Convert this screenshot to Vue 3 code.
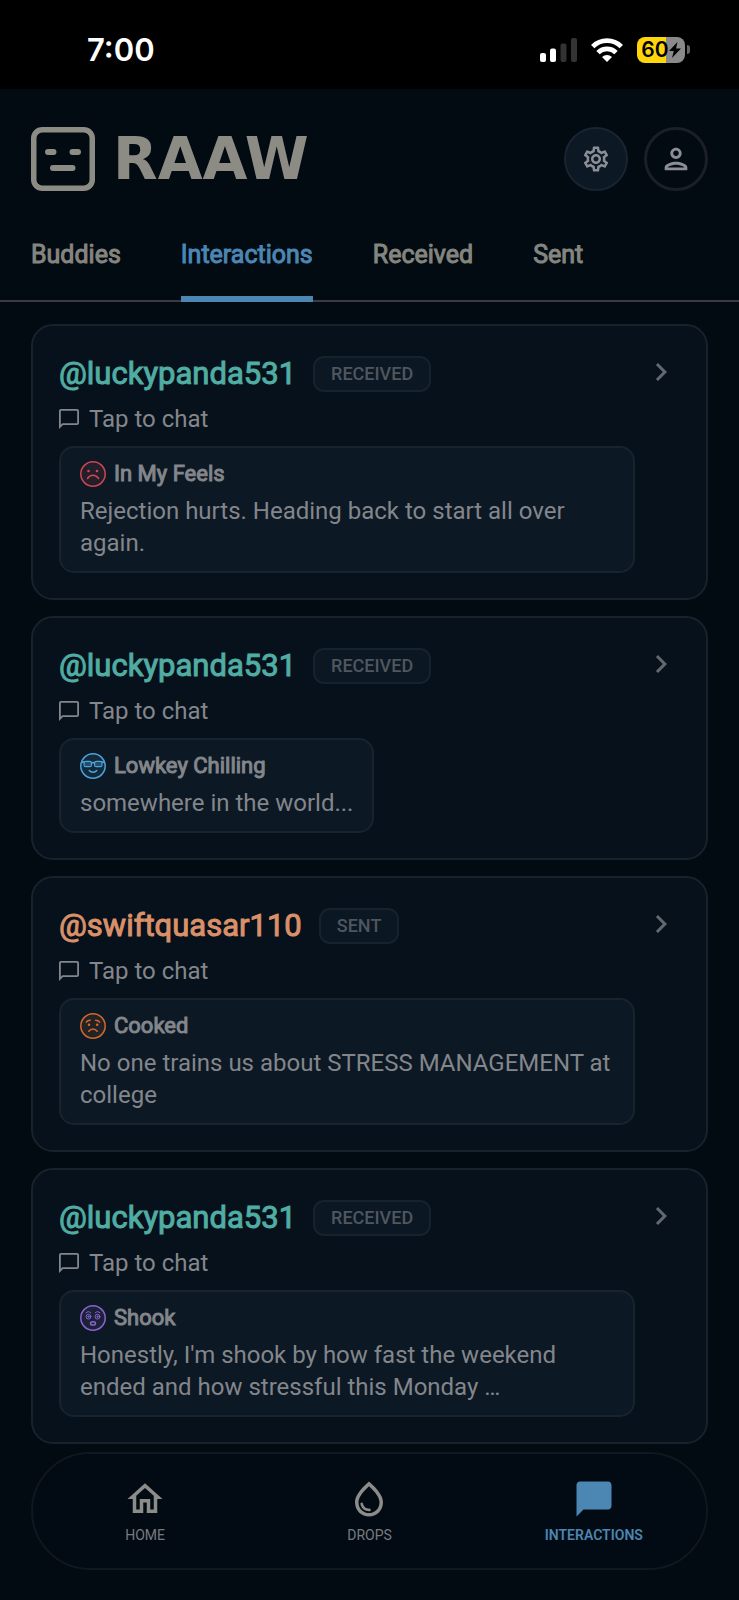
<script setup>
import { ref } from 'vue'

const tabs = ['Buddies', 'Interactions', 'Received', 'Sent']
const activeTab = ref('Interactions')

const cards = [
  { id: 1, user: '@luckypanda531', kind: 'received', mood: 'feels', label: 'In My Feels', text: 'Rejection hurts. Heading back to start all over again.' },
  { id: 2, user: '@luckypanda531', kind: 'received', mood: 'chill', label: 'Lowkey Chilling', text: 'somewhere in the world...' },
  { id: 3, user: '@swiftquasar110', kind: 'sent', mood: 'cooked', label: 'Cooked', text: 'No one trains us about STRESS MANAGEMENT at college' },
  { id: 4, user: '@luckypanda531', kind: 'received', mood: 'shook', label: 'Shook', text: "Honestly, I'm shook by how fast the weekend ended and how stressful this Monday …" },
]
</script>

<template>
  <div class="app">
    <div class="status">
      <span class="time">7:00</span>
      <div class="status-icons">
        <svg class="signal" viewBox="0 0 37 24" aria-label="Signal">
          <rect x="0" y="15" width="6" height="9" rx="2" fill="#fff" />
          <rect x="10" y="10.500" width="6" height="13.500" rx="2" fill="#fff" />
          <rect x="20.500" y="5.500" width="6" height="18.500" rx="2" fill="#333" />
          <rect x="31" y="0" width="6" height="24" rx="2" fill="#333" />
        </svg>
        <svg class="wifi" viewBox="0 0 32 24" aria-label="Wi-Fi">
          <g fill="none" stroke="#fff" stroke-width="4.800">
            <path d="M1.700 8.600a20.300 20.300 0 0 1 28.600 0" />
            <path d="M7 14.600a12.800 12.800 0 0 1 18 0" />
          </g>
          <path d="M16 24l-5-5a7.300 7.300 0 0 1 10 0z" fill="#fff" />
        </svg>
        <div class="battery">
          <div class="cell">
            <span>60</span>
            <svg class="bolt" viewBox="0 0 12 16"><path d="M8.500 0L0 9h4.800L3 16l9-9.500H7z" fill="#000" /></svg>
          </div>
          <i class="nub"></i>
        </div>
      </div>
    </div>

    <header class="header">
      <div class="brand">
        <svg class="logo" viewBox="0 0 64 64" aria-hidden="true">
          <rect x="2.750" y="2.750" width="58.500" height="58.500" rx="8.500" fill="none" stroke="#8c8b84" stroke-width="5.500" />
          <path d="M17 25h5.500M41.500 25h5.500M22 41h19.500" stroke="#8c8b84" stroke-width="6" stroke-linecap="round" />
        </svg>
        <h1>RAAW</h1>
      </div>
      <div class="actions">
        <button class="round filled" aria-label="Settings">
          <svg class="gear" viewBox="0 0 24 24"><path d="M19.430 12.980c.04-.32.07-.64.07-.98 0-.34-.03-.66-.07-.98l2.110-1.650c.19-.15.24-.42.12-.64l-2-3.460c-.09-.16-.26-.25-.44-.25-.06 0-.12.01-.17.03l-2.490 1c-.52-.4-1.080-.73-1.690-.98l-.38-2.650C14.460 2.180 14.250 2 14 2h-4c-.25 0-.46.18-.49.42l-.38 2.650c-.61.25-1.170.59-1.690.98l-2.490-1c-.06-.02-.12-.03-.18-.03-.17 0-.34.09-.43.25l-2 3.460c-.13.22-.07.49.12.64l2.110 1.650c-.04.32-.07.65-.07.98 0 .33.03.66.07.98l-2.110 1.650c-.19.15-.24.42-.12.64l2 3.460c.09.16.26.25.44.25.06 0 .12-.01.17-.03l2.490-1c.52.4 1.080.73 1.690.98l.38 2.650c.03.24.24.42.49.42h4c.25 0 .46-.18.49-.42l.38-2.650c.61-.25 1.170-.59 1.690-.98l2.490 1c.06.02.12.03.18.03.17 0 .34-.09.43-.25l2-3.460c.12-.22.07-.49-.12-.64l-2.110-1.650zm-1.980-1.710c.04.31.05.52.05.73 0 .21-.02.43-.05.73l-.14 1.130.89.7 1.080.84-.7 1.210-1.270-.51-1.040-.42-.9.68c-.43.32-.84.56-1.250.73l-1.060.43-.16 1.130-.2 1.350h-1.400l-.19-1.350-.16-1.130-1.060-.43c-.43-.18-.83-.41-1.230-.71l-.91-.7-1.060.43-1.270.51-.7-1.210 1.080-.84.89-.7-.14-1.130c-.03-.31-.05-.54-.05-.74s.02-.43.05-.73l.14-1.130-.89-.7-1.080-.84.7-1.210 1.270.51 1.040.42.9-.68c.43-.32.84-.56 1.250-.73l1.060-.43.16-1.130.2-1.350h1.390l.19 1.350.16 1.130 1.060.43c.43.18.83.41 1.230.71l.91.7 1.060-.43 1.270-.51.7 1.210-1.070.85-.89.7.14 1.130zM12 8c-2.210 0-4 1.790-4 4s1.790 4 4 4 4-1.790 4-4-1.790-4-4-4zm0 6c-1.100 0-2-.9-2-2s.9-2 2-2 2 .9 2 2-.9 2-2 2z" /></svg>
        </button>
        <button class="round" aria-label="Profile">
          <svg class="person" viewBox="0 0 24 24"><path d="M12 6c1.100 0 2 .9 2 2s-.9 2-2 2-2-.9-2-2 .9-2 2-2m0 10c2.700 0 5.800 1.290 6 2H6c.23-.72 3.310-2 6-2m0-12C9.790 4 8 5.790 8 8s1.790 4 4 4 4-1.790 4-4-1.790-4-4-4zm0 10c-2.670 0-8 1.340-8 4v2h16v-2c0-2.660-5.330-4-8-4z" /></svg>
        </button>
      </div>
    </header>

    <nav class="tabs" aria-label="Lists">
      <button v-for="t in tabs" :key="t" :class="{ active: t === activeTab }" @click="activeTab = t">{{ t }}</button>
    </nav>

    <main class="list">
      <a v-for="c in cards" :key="c.id" class="card" href="#chat">
        <div class="body">
          <div class="top">
            <h2 :class="c.kind">{{ c.user }}</h2>
            <span class="badge">{{ c.kind.toUpperCase() }}</span>
          </div>
          <div class="tap">
            <svg viewBox="2 2 20 20"><path d="M20 2H4c-1.100 0-2 .9-2 2v18l4-4h14c1.100 0 2-.9 2-2V4c0-1.100-.9-2-2-2zm.2 14.200H5.300L3.800 17.700V3.800h16.400z" /></svg>
            <span>Tap to chat</span>
          </div>
          <div class="bubble">
            <div class="mood">
              <svg v-if="c.mood === 'feels'" class="feels" viewBox="0 0 26 26">
                <circle cx="13" cy="13" r="12.200" />
                <path d="M7.500 17.500c2.500-4.200 8.500-4.200 11 0" />
                <circle class="dot" cx="8.500" cy="10" r="1.300" /><circle class="dot" cx="17" cy="10" r="1.300" />
              </svg>
              <svg v-else-if="c.mood === 'chill'" class="chill" viewBox="0 0 26 26">
                <circle cx="13" cy="13" r="12.200" />
                <path d="M1.500 9.500l2.500-.8M24.500 9.500l-2.500-.8M11.500 10.200c1-.8 2-.8 3 0M9.200 17.500c2 2.300 5.600 2.300 7.600 0" />
                <rect class="lens" x="4" y="8.300" width="7.500" height="5.400" rx="1.800" />
                <rect class="lens" x="14.500" y="8.300" width="7.500" height="5.400" rx="1.800" />
              </svg>
              <svg v-else-if="c.mood === 'cooked'" class="cooked" viewBox="0 0 26 26">
                <circle cx="13" cy="13" r="12.200" />
                <path d="M6.200 9.200c.8-1.300 2.200-2 4-2M15.600 7.200c1.800 0 3.200.7 4 2M8.800 18.300c2.400-3.200 6-3.200 8.400 0" />
                <circle class="dot" cx="9" cy="11.800" r="1.300" /><circle class="dot" cx="17.200" cy="11.800" r="1.300" />
              </svg>
              <svg v-else class="shook" viewBox="0 0 26 26">
                <circle cx="13" cy="13" r="12.200" />
                <g class="thin">
                  <circle cx="8.500" cy="11.700" r="2.400" /><circle cx="17.500" cy="11.700" r="2.400" />
                  <circle cx="8.500" cy="11.700" r=".7" /><circle cx="17.500" cy="11.700" r=".7" />
                  <path d="M6 7.800c1.200-1.500 3.600-1.500 4.800 0M15.200 7.800c1.200-1.500 3.600-1.500 4.800 0" />
                </g>
                <ellipse cx="13" cy="18.400" rx="2.500" ry="1.700" />
              </svg>
              <strong>{{ c.label }}</strong>
            </div>
            <p>{{ c.text }}</p>
          </div>
        </div>
        <svg class="chevron" viewBox="0 0 24 24"><path d="M10 6L8.590 7.410 13.170 12l-4.580 4.590L10 18l6-6z" /></svg>
      </a>
    </main>

    <nav class="dock" aria-label="Main">
      <a href="#home">
        <svg viewBox="0 0 24 24"><path d="M12 5.690l5 4.500V18h-2v-6H9v6H7v-7.810l5-4.500M12 3L2 12h3v8h6v-6h2v6h6v-8h3L12 3z" /></svg>
        <span>HOME</span>
      </a>
      <a href="#drops">
        <svg viewBox="0 0 24 24"><path d="M12 2c-5.330 4.550-8 8.480-8 11.800 0 4.980 3.800 8.200 8 8.200s8-3.220 8-8.200c0-3.320-2.670-7.250-8-11.800zm0 18c-3.350 0-6-2.570-6-6.200 0-2.340 1.950-5.440 6-9.140 4.050 3.700 6 6.790 6 9.140 0 3.630-2.650 6.200-6 6.200zm-4.170-6c.37 0 .67.26.74.62.41 2.220 2.280 2.980 3.640 2.870.43-.02.79.32.79.75 0 .4-.32.73-.72.75-2.130.13-4.620-1.090-5.190-4.120-.08-.45.28-.87.74-.87z" /></svg>
        <span>DROPS</span>
      </a>
      <a href="#interactions" class="active" aria-current="page">
        <svg viewBox="0 0 24 24"><path d="M20 2H4c-1.100 0-2 .9-2 2v18l4-4h14c1.100 0 2-.9 2-2V4c0-1.100-.9-2-2-2z" /></svg>
        <span>INTERACTIONS</span>
      </a>
    </nav>
  </div>
</template>

<style>
body { background: #020a12; }
</style>

<style scoped>
* { box-sizing: border-box; }
.app {
  min-height: 100vh;
  background: #020a12;
  color: #83868b;
  font-family: Roboto, "Liberation Sans", sans-serif;
}
svg { display: block; flex: none; fill: currentColor; }
h1, h2, p { margin: 0; }
button { border: 0; background: none; padding: 0; color: inherit; font: inherit; cursor: pointer; }
a { color: inherit; text-decoration: none; }

.status {
  height: 89px;
  background: #000;
  display: flex;
  align-items: center;
  justify-content: space-between;
  padding: 10px 49px 0 87px;
}
.time { color: #fff; font: 600 31px/40px Inter, sans-serif; }
.status-icons { display: flex; align-items: center; gap: 14px; }
.signal { width: 37px; height: 24px; }
.wifi { width: 32px; height: 24px; }
.battery { display: flex; align-items: center; gap: 2px; }
.cell {
  width: 48px;
  height: 26px;
  border-radius: 8px;
  background: linear-gradient(90deg, #ffd60a 60%, #8a8a8a 60%);
  display: flex;
  align-items: center;
  justify-content: center;
  color: #000;
  font: 600 21px/26px Inter, sans-serif;
}
.bolt { width: 12px; height: 16px; }
.nub { width: 3px; height: 9px; border-radius: 0 4px 4px 0; background: #666; }

.header {
  display: flex;
  align-items: center;
  justify-content: space-between;
  padding: 38px 31px 0;
}
.brand { display: flex; align-items: center; gap: 18px; color: #8c8b84; }
.logo { width: 64px; height: 64px; }
h1 { font: 700 58px/60px "DejaVu Sans", sans-serif; }
.actions { display: flex; gap: 16px; }
.round {
  width: 64px;
  height: 64px;
  border-radius: 50%;
  border: 3px solid #1b1f2a;
  display: flex;
  align-items: center;
  justify-content: center;
  color: #8b8e95;
}
.round.filled { background: #0c1925; border: 2px solid #18242f; }
.gear { width: 30px; height: 30px; }
.person { width: 34px; height: 34px; }

.tabs {
  display: flex;
  gap: 60px;
  padding: 0 31px;
  margin-top: 16px;
  height: 95px;
  border-bottom: 2px solid #3a3b48;
}
.tabs button {
  height: 95px;
  padding-top: 6px;
  font-size: 25px;
  line-height: 30px;
  color: #85857f;
  -webkit-text-stroke: 1px currentColor;
  border-bottom: 6px solid transparent;
}
.tabs button.active {
  color: #4c86b2;
  background: linear-gradient(#4c86b2, #4c86b2) bottom / 100% 6px no-repeat border-box;
  border-radius: 5px 5px 0 0;
}

.list { display: flex; flex-direction: column; gap: 16px; padding: 22px 31px 0; }
.card {
  display: flex;
  align-items: flex-start;
  gap: 8px;
  padding: 28px 27px 25px 26px;
  border: 2px solid #19212b;
  border-radius: 22px;
  background: #07111b;
}
.body { flex: 1; min-width: 0; }
.top { display: flex; align-items: center; gap: 17px; height: 40px; }
h2 { font-size: 31px; line-height: 36px; font-weight: 400; -webkit-text-stroke: 1px currentColor; }
h2.received { color: #50ada3; }
h2.sent { color: #da9069; }
.badge {
  height: 36px;
  padding: 0 16px;
  border: 2px solid #17222c;
  border-radius: 11px;
  background: #0b1722;
  color: #50565f;
  font-size: 18px;
  line-height: 32px;
  font-weight: 500;
}
.tap { display: flex; align-items: center; gap: 10px; margin-top: 11px; font-size: 24px; line-height: 28px; }
.tap svg { width: 20px; height: 20px; }
.bubble {
  width: fit-content;
  max-width: 100%;
  margin-top: 13px;
  padding: 12px 19px;
  border: 2px solid #18232d;
  border-radius: 15px;
  background: #0c1824;
}
.mood { display: flex; align-items: center; gap: 8px; height: 28px; font-size: 22px; line-height: 28px; }
.mood strong { font-weight: 400; -webkit-text-stroke: 1px currentColor; }
.mood svg { width: 26px; height: 26px; fill: none; stroke: currentColor; stroke-width: 1.500; stroke-linecap: round; }
.mood svg > circle:first-child { fill: currentColor; fill-opacity: 0.120; }
.mood .dot { fill: currentColor; stroke: none; }
.mood .lens { fill: currentColor; fill-opacity: 0.300; stroke-width: 1.200; }
.mood .thin { stroke-width: 1; }
.feels { color: #cb4754; }
.chill { color: #4aa3dc; }
.cooked { color: #d0682f; }
.shook { color: #8a63cb; }
p { margin-top: 7px; font-size: 24px; line-height: 32px; }
.chevron { width: 36px; height: 36px; color: #63676e; }

.dock {
  display: flex;
  margin: 8px 31px 0;
  height: 118px;
  border: 2px solid #10171f;
  border-radius: 59px;
  background: #020b13;
}
.dock a {
  flex: 1;
  display: flex;
  flex-direction: column;
  align-items: center;
  justify-content: center;
  gap: 6px;
  color: #8c8c88;
  font-size: 14px;
  line-height: 18px;
}
.dock span { color: #777b80; }
.dock svg { width: 42px; height: 42px; }
.dock .active, .dock .active span { color: #4c86b2; font-weight: 600; }
</style>
